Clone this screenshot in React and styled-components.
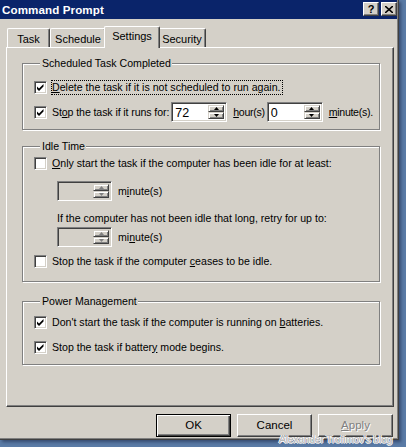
import React from "react";
import styled, { createGlobalStyle } from "styled-components";

const GlobalStyle = createGlobalStyle`
  html, body {
    margin: 0;
    padding: 0;
    background: #5a7ba6;
  }
  body {
    width: 406px;
    height: 447px;
    overflow: hidden;
    font-family: "Liberation Sans", Arial, sans-serif;
    font-size: 10.6px;
    color: #000;
  }
`;

const Window = styled.div`
  position: relative;
  width: 398px;
  height: 439px;
  background: #d4d0c8;
  border-right: 1px solid #404040;
  border-bottom: 1px solid #404040;
  box-shadow: inset -1px -1px #808080, 2px 2px 3px rgba(20, 30, 60, 0.5);
  display: flex;
  flex-direction: column;
`;

const TitleBar = styled.div`
  height: 19px;
  width: 397px;
  background: #0a246a;
  display: flex;
  align-items: center;
  padding: 0 0 0 2px;
  box-sizing: border-box;
`;

const Title = styled.div`
  flex: 1;
  color: #fff;
  font-weight: bold;
  font-size: 11.6px;
  letter-spacing: 0.1px;
  margin-top: -1px;
`;

const CaptionButton = styled.div`
  width: 16px;
  height: 14px;
  box-sizing: border-box;
  background: #d4d0c8;
  border: 1px solid;
  border-color: #fff #404040 #404040 #fff;
  box-shadow: inset -1px -1px #808080;
  margin-right: ${(p) => p.$gap || 0}px;
  display: flex;
  align-items: center;
  justify-content: center;
  font-weight: bold;
  font-size: 11px;
  line-height: 1;
  margin-top: -1px;
`;

const Body = styled.div`
  padding: 7px 0 0 6px;
  display: flex;
  flex-direction: column;
`;

const TabStrip = styled.div`
  display: flex;
  align-items: flex-end;
  height: 21px;
  padding-left: 1px;
  position: relative;
  z-index: 1;
`;

const Tab = styled.div`
  box-sizing: border-box;
  height: ${(p) => (p.$active ? 22 : 19)}px;
  margin: 0 ${(p) => (p.$active ? -2 : 0)}px ${(p) => (p.$active ? -1 : 0)}px;
  width: ${(p) => p.$w}px;
  background: #d4d0c8;
  border-top: 1px solid #fff;
  border-left: 1px solid #fff;
  border-right: 1px solid #404040;
  border-radius: 2px 2px 0 0;
  box-shadow: inset -1px 0 #808080;
  display: flex;
  align-items: flex-start;
  justify-content: center;
  padding-top: ${(p) => (p.$active ? 3 : 4)}px;
  font-size: 11px;
  z-index: ${(p) => (p.$active ? 2 : 1)};
`;

const Panel = styled.div`
  box-sizing: border-box;
  width: 388px;
  height: 360px;
  border: 1px solid;
  border-color: #fff #404040 #404040 #fff;
  box-shadow: inset -1px -1px #808080;
  padding: 9px 0 0 15px;
  display: flex;
  flex-direction: column;
`;

const Group = styled.fieldset`
  box-sizing: border-box;
  width: 358px;
  margin: ${(p) => p.$top || 0}px 0 0 0;
  padding: ${(p) => p.$pad};
  border: 1px solid #808080;
  box-shadow: inset 1px 1px #fff, 1px 1px #fff;
  display: flex;
  flex-direction: column;
  min-width: 0;
`;

const Legend = styled.legend`
  padding: 0 1px 0 2px;
  margin-left: 6px;
  line-height: 13px;
  background: #d4d0c8;
`;

const Row = styled.div`
  display: flex;
  align-items: center;
  height: 20px;
  margin-top: ${(p) => p.$top || 0}px;
  padding-left: ${(p) => p.$indent || 0}px;
`;

const Label = styled.span`
  margin-left: ${(p) => p.$left || 0}px;
  white-space: nowrap;
  line-height: 13px;
  letter-spacing: ${(p) => p.$tight || 0}px;
  outline: ${(p) => (p.$focus ? "1px dotted #000" : "none")};
  outline-offset: 0;
  padding-right: ${(p) => (p.$focus ? 1 : 0)}px;
`;

const Hint = styled.div`
  margin-top: ${(p) => p.$top || 0}px;
  padding-left: 23px;
  line-height: 14px;
  height: 14px;
`;

const Box = styled.div`
  box-sizing: border-box;
  width: 13px;
  height: 13px;
  background: #fff;
  border: 1px solid;
  border-color: #808080 #fff #fff #808080;
  box-shadow: inset 1px 1px #404040, inset -1px -1px #d4d0c8;
  display: flex;
  align-items: center;
  justify-content: center;
  flex: none;
`;

const Spin = styled.div`
  box-sizing: border-box;
  width: ${(p) => p.$w || 56}px;
  height: 20px;
  background: ${(p) => (p.$disabled ? "#d4d0c8" : "#fff")};
  border: 1px solid;
  border-color: #808080 #fff #fff #808080;
  box-shadow: inset 1px 1px #404040, inset -1px -1px #d4d0c8;
  display: flex;
  padding: 2px 2px 2px 3px;
  margin-left: ${(p) => p.$left || 0}px;
  flex: none;
`;

const SpinValue = styled.div`
  flex: 1;
  font-size: 12.5px;
  line-height: 16px;
`;

const SpinButtons = styled.div`
  width: 16px;
  display: flex;
  flex-direction: column;
`;

const SpinButton = styled.div`
  flex: 1;
  box-sizing: border-box;
  background: #d4d0c8;
  border: 1px solid;
  border-color: #d4d0c8 #404040 #404040 #d4d0c8;
  box-shadow: inset 1px 1px #fff, inset -1px -1px #808080;
  display: flex;
  align-items: center;
  justify-content: center;
`;

const Footer = styled.div`
  display: flex;
  justify-content: flex-end;
  gap: 6px;
  width: 388px;
  padding-right: 1px;
  box-sizing: border-box;
  margin-top: 7px;
`;

const Button = styled.div`
  box-sizing: border-box;
  width: 75px;
  height: 23px;
  border: 1px solid;
  border-color: ${(p) => (p.$default ? "#000" : "#fff #404040 #404040 #fff")};
  box-shadow: ${(p) =>
    p.$default
      ? "inset 1px 1px #fff, inset -1px -1px #404040, inset -2px -2px #808080"
      : "inset -1px -1px #808080"};
  display: flex;
  align-items: center;
  justify-content: center;
  color: ${(p) => (p.$disabled ? "#808080" : "#000")};
  text-shadow: ${(p) => (p.$disabled ? "1px 1px #fff" : "none")};
  font-size: 11.5px;
  line-height: 13px;
`;

const Watermark = styled.div`
  position: absolute;
  right: 6px;
  bottom: -6px;
  font-size: 10.5px;
  line-height: 11px;
  color: #b8b8b8;
  text-shadow: 1px 0 #fff, -1px 0 #fff, 0 1px #eee;
  letter-spacing: -0.3px;
  white-space: nowrap;
`;

const Check = ({ checked }) => (
  <Box>
    {checked && (
      <svg width="9" height="9" viewBox="0 0 9 9">
        <path d="M1 3.5 L3 5.5 L7.5 1 L7.5 3.5 L3 8 L1 6 Z" fill="#000" />
      </svg>
    )}
  </Box>
);

const Arrow = ({ up, disabled }) => (
  <svg width="5" height="3" viewBox="0 0 5 3">
    <path
      d={up ? "M2.5 0 L5 3 L0 3 Z" : "M0 0 L5 0 L2.5 3 Z"}
      fill={disabled ? "#808080" : "#000"}
    />
  </svg>
);

const Spinner = ({ value, disabled, w, left }) => (
  <Spin $disabled={disabled} $w={w} $left={left}>
    <SpinValue>{value}</SpinValue>
    <SpinButtons>
      <SpinButton>
        <Arrow up disabled={disabled} />
      </SpinButton>
      <SpinButton>
        <Arrow disabled={disabled} />
      </SpinButton>
    </SpinButtons>
  </Spin>
);

const U = styled.u`
  text-decoration: underline;
  text-underline-offset: 1px;
`;

export default function App() {
  return (
    <>
      <GlobalStyle />
      <Window>
        <TitleBar>
          <Title>Command Prompt</Title>
          <CaptionButton $gap={2}>?</CaptionButton>
          <CaptionButton $gap={0}>
            <svg width="8" height="7" viewBox="0 0 8 7">
              <path d="M0 0 L8 7 M8 0 L0 7" stroke="#000" strokeWidth="1.6" />
            </svg>
          </CaptionButton>
        </TitleBar>
        <Body>
          <TabStrip>
            <Tab $w={43}>Task</Tab>
            <Tab $w={56}>Schedule</Tab>
            <Tab $w={56} $active>
              Settings
            </Tab>
            <Tab $w={48}>Security</Tab>
          </TabStrip>
          <Panel>
            <Group $pad="7px 0 7px 11px">
              <Legend>Scheduled Task Completed</Legend>
              <Row>
                <Check checked />
                <Label $left={5} $focus>
                  <U>D</U>elete the task if it is not scheduled to run again.
                </Label>
              </Row>
              <Row $top={5}>
                <Check checked />
                <Label $left={5} $tight={-0.1}>
                  St<U>o</U>p the task if it runs for:
                </Label>
                <Spinner value="72" left={2} />
                <Label $left={6} $tight={-0.3}>
                  <U>h</U>our(s)
                </Label>
                <Spinner value="0" left={2} w={56} />
                <Label $left={6} $tight={-0.3}>
                  <U>m</U>inute(s).
                </Label>
              </Row>
            </Group>

            <Group $top={10} $pad="0 0 10px 11px">
              <Legend>Idle Time</Legend>
              <Row>
                <Check />
                <Label $left={5}>
                  <U>O</U>nly start the task if the computer has been idle for at least:
                </Label>
              </Row>
              <Row $top={8} $indent={23}>
                <Spinner disabled w={55} />
                <Label $left={6}>
                  m<U>i</U>nute(s)
                </Label>
              </Row>
              <Hint $top={10}>
                If the computer has not been idle that long, retry for up to:
              </Hint>
              <Row $top={2} $indent={23}>
                <Spinner disabled w={55} />
                <Label $left={6}>
                  mi<U>n</U>ute(s)
                </Label>
              </Row>
              <Row $top={4}>
                <Check />
                <Label $left={5}>
                  Stop the task if the computer <U>c</U>eases to be idle.
                </Label>
              </Row>
            </Group>

            <Group $top={13} $pad="4px 0 7px 11px">
              <Legend>Power Management</Legend>
              <Row>
                <Check checked />
                <Label $left={5}>
                  Don't start the task if the computer is running on <U>b</U>atteries.
                </Label>
              </Row>
              <Row $top={5}>
                <Check checked />
                <Label $left={5}>
                  Stop the task if batter<U>y</U> mode begins.
                </Label>
              </Row>
            </Group>
          </Panel>
          <Footer>
            <Button $default>OK</Button>
            <Button>Cancel</Button>
            <Button $disabled>
              <U>A</U>pply
            </Button>
          </Footer>
        </Body>
        <Watermark>Alexander Trofimov's blog</Watermark>
      </Window>
    </>
  );
}
